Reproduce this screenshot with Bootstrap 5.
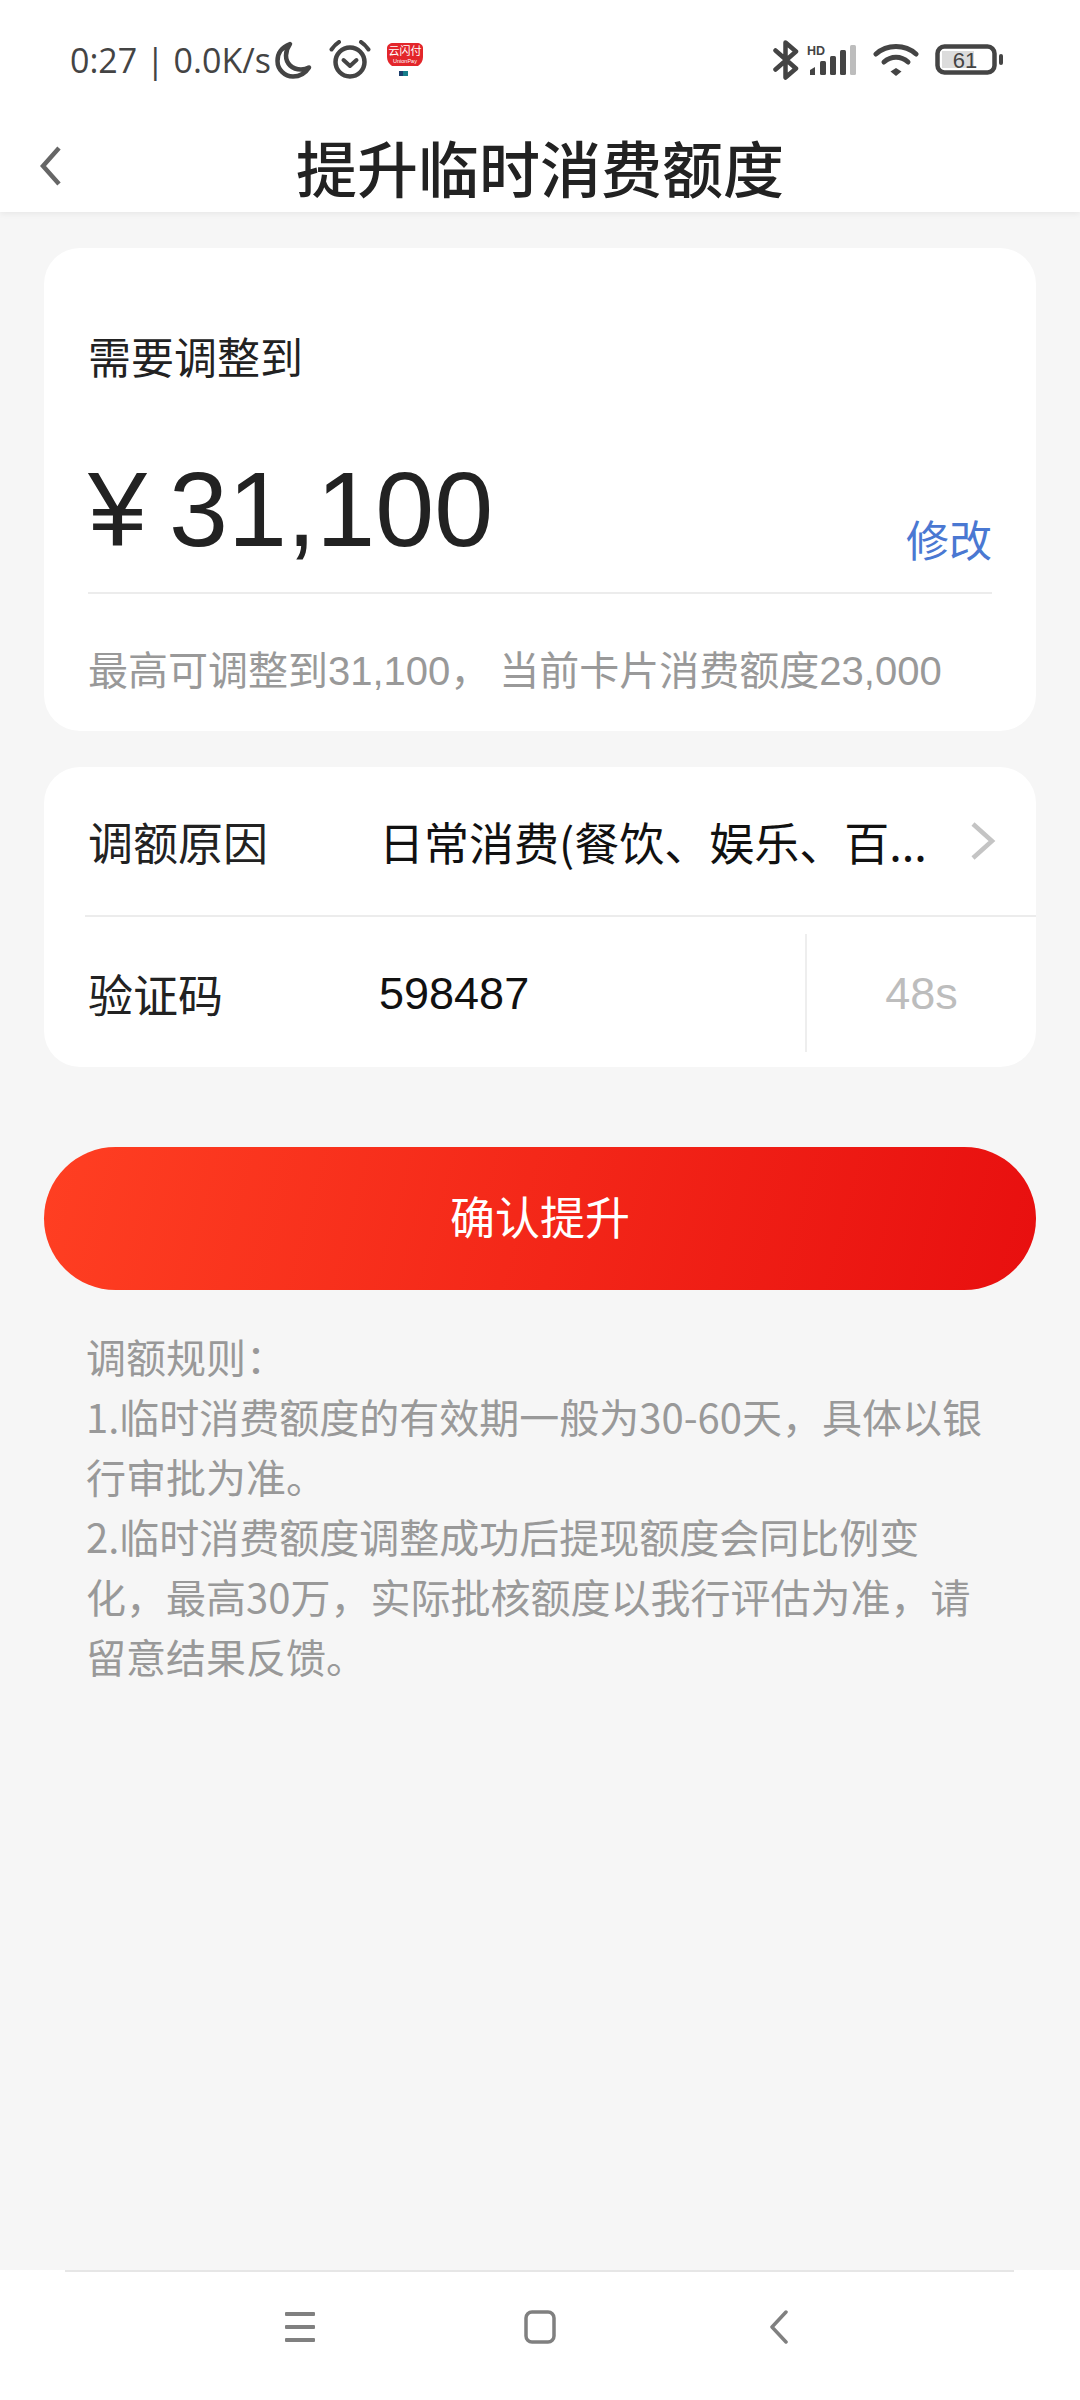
<!doctype html>
<html lang="zh">
<head>
<meta charset="utf-8">
<title>提升临时消费额度</title>
<link rel="stylesheet" href="https://cdn.jsdelivr.net/npm/bootstrap@5.3.0/dist/css/bootstrap.min.css">
<style>
html,body{margin:0;padding:0;}
body{width:1080px;height:2400px;overflow:hidden;background:#f6f6f6;font-family:"Noto Sans CJK SC","Noto Sans",sans-serif;}
.screen{width:1080px;height:2400px;}
.topbar{height:212px;background:#fff;box-shadow:0 2px 6px rgba(0,0,0,.06);position:relative;z-index:2;}
.statusrow{height:120px;padding:0 76px 0 70px;color:#444;}
.stime{font-family:"Open Sans","Noto Sans",sans-serif;font-size:34px;font-weight:500;line-height:1;letter-spacing:0;white-space:nowrap;}
.titlerow{height:92px;}
.titleside{flex:1 1 0;padding-left:40px;}
.ptitle{font-size:61px;font-weight:500;color:#222;line-height:1;margin:0;white-space:nowrap;}
.bodyarea{padding:36px 44px 0;}
.sheet{background:#fff;border-radius:36px;}
.sheet-a{height:483px;padding:0 44px;margin-bottom:36px;}
.lab1{font-size:43px;color:#222;line-height:1;padding-top:86px;}
.amountrow{height:217px;padding-bottom:30px;border-bottom:2px solid #ececec;}
.sheet-a .amountrow{margin-top:0;}
.amount{font-family:"Liberation Sans",sans-serif;font-size:106px;line-height:1;color:#222;}
.amount b{font-weight:400;margin-right:22px;}
.editlink{font-size:43px;color:#4a78d2;line-height:1;text-decoration:none;padding-bottom:2px;}
.hint{font-size:40px;color:#999;line-height:1;padding-top:54px;white-space:nowrap;}
.hint i{font-style:normal;font-family:"Liberation Sans",sans-serif;}
.sheet-b{height:300px;margin-bottom:80px;}
.frow{padding-left:44px;}
.frow1{height:148px;}
.frow2{height:152px;}
.rowline{height:2px;background:#ececec;margin-left:41px;}
.flabel{width:291px;flex:none;font-size:45px;color:#222;line-height:1;}
.fvalue{font-size:45px;color:#111;line-height:1;white-space:nowrap;}
.fvalue i{font-style:normal;}
.digits{font-family:"Liberation Sans",sans-serif;}
.chev{margin-left:auto;margin-right:40px;}
.vline{width:2px;height:118px;background:#eee;margin-left:auto;}
.counter{width:229px;text-align:center;font-family:"Liberation Sans",sans-serif;font-size:45px;color:#bdbdbd;line-height:1;}
.cta{display:block;width:100%;height:143px;border:0;border-radius:72px;background:linear-gradient(105deg,#ff3f22 0%,#e80f0f 100%);color:#fff;font-size:45px;line-height:1;padding:0 0 6px;}
.rules{margin:36px 0 0 42px;font-size:40px;line-height:60px;color:#999;white-space:nowrap;}
.navstrip{height:130px;background:#fff;position:relative;}
.navstrip::before{content:"";position:absolute;top:0;left:65px;right:66px;height:2px;background:#e6e6e6;}
.navicons{height:100%;padding-bottom:16px;}
.navslot{width:239px;}
</style>
</head>
<body>
<div class="screen d-flex flex-column">
  <header class="topbar">
    <div class="statusrow d-flex align-items-center justify-content-between">
      <div class="d-flex align-items-center">
        <span class="stime">0:27 | 0.0K/s</span>
        <svg class="ms-1" width="38" height="38" viewBox="0 0 38 38" fill="none" stroke="#444" stroke-width="4.5" stroke-linecap="round" stroke-linejoin="round"><path d="M15 3C7 6 2.500 12 2.500 20c0 8.500 7 15.500 15.500 15.500 7.500 0 12.500-3.500 16-9-2.500 1.500-5.500 2-8 2-9 0-15-6-15-14 0-4 1.500-8 4-11.500z"/></svg>
        <svg class="ms-3" width="42" height="40" viewBox="0 0 42 40" fill="none" stroke="#444" stroke-linecap="round" stroke-linejoin="round"><circle cx="21" cy="22" r="14.500" stroke-width="4.500"/><path d="M14.500 20l6.500 6 6.500-6" stroke-width="4"/><path d="M2.500 9.500C5 6 7.500 3.500 10 2M39.500 9.500C37 6 34.500 3.500 32 2" stroke-width="4"/></svg>
        <svg class="ms-3" width="36" height="34" viewBox="0 0 36 34"><path d="M6 0h24c3 0 6 2 6 5v9c0 4-2 7-5 9H5c-3-2-5-5-5-9V5c0-3 3-5 6-5z" fill="#e3262b"/><text x="18" y="12" font-size="11" fill="#fff" text-anchor="middle" font-family="Noto Sans CJK SC,sans-serif">云闪付</text><text x="18" y="20" font-size="5.500" fill="#fff" text-anchor="middle" font-family="Liberation Sans,sans-serif">UnionPay</text><rect x="12" y="28" width="4" height="5" fill="#1c3f6e"/><rect x="16" y="28" width="5" height="5" fill="#157d8a"/></svg>
      </div>
      <div class="d-flex align-items-center">
        <svg width="26" height="40" viewBox="0 0 26 40" fill="none" stroke="#444" stroke-width="4.500" stroke-linecap="round" stroke-linejoin="round"><path d="M2.500 10.500 L23 28.500 L12.500 37.500 V2.500 L23 11.500 L2.500 29.500"/></svg>
        <svg class="ms-2" width="50" height="32" viewBox="0 0 50 32"><text x="0" y="11" font-size="12.500" font-weight="700" fill="#444" font-family="Liberation Sans,sans-serif">HD</text><path d="M3 31v-5l5-3v8z" fill="#444"/><rect x="13" y="17" width="6" height="14" rx="1.500" fill="#444"/><rect x="23" y="12" width="6" height="19" rx="1.500" fill="#444"/><rect x="33" y="6" width="6" height="25" rx="1.500" fill="#444"/><rect x="43" y="1" width="6" height="30" rx="1.500" fill="#bdbdbd"/></svg>
        <svg class="ms-3" width="46" height="34" viewBox="0 0 46 34" fill="none" stroke="#444" stroke-width="5" stroke-linecap="round"><path d="M3 11C14 1 32 1 43 11"/><path d="M11 19C18 12.500 28 12.500 35 19"/><path d="M23 25l5.500 3.500L23 33l-5.500-4.500z" fill="#444" stroke="none"/></svg>
        <svg class="ms-3" width="69" height="32" viewBox="0 0 69 32"><rect x="2.500" y="2.500" width="57" height="26" rx="7" fill="none" stroke="#444" stroke-width="4.500"/><rect x="7" y="7" width="32" height="17" fill="#dcdcdc"/><text x="30" y="24" font-size="22" fill="#444" text-anchor="middle" font-family="Liberation Sans,sans-serif">61</text><rect x="64" y="10" width="4" height="11" rx="2" fill="#444"/></svg>
      </div>
    </div>
    <div class="titlerow d-flex align-items-center">
      <div class="titleside"><svg class="d-block" width="22" height="40" viewBox="0 0 22 40" fill="none" stroke="#666" stroke-width="4.500"><path d="M19 2 L3 20 L19 38"/></svg></div>
      <h1 class="ptitle">提升临时消费额度</h1>
      <div class="titleside"></div>
    </div>
  </header>

  <main class="bodyarea flex-grow-1">
    <section class="sheet sheet-a">
      <div class="lab1">需要调整到</div>
      <div class="amountrow d-flex align-items-end justify-content-between">
        <div class="amount"><b>¥</b>31,100</div>
        <a class="editlink" href="#">修改</a>
      </div>
      <div class="hint">最高可调整到<i>31,100</i>， 当前卡片消费额度<i>23,000</i></div>
    </section>

    <section class="sheet sheet-b">
      <div class="frow frow1 d-flex align-items-center">
        <div class="flabel">调额原因</div>
        <div class="fvalue">日常消费(餐饮、娱乐、百...</div>
        <svg class="chev" width="26" height="38" viewBox="0 0 26 38" fill="none" stroke="#c4c4c4" stroke-width="4.500"><path d="M3 2 L22 19 L3 36"/></svg>
      </div>
      <div class="rowline"></div>
      <div class="frow frow2 d-flex align-items-center">
        <div class="flabel">验证码</div>
        <div class="fvalue digits">598487</div>
        <div class="vline"></div>
        <div class="counter">48s</div>
      </div>
    </section>

    <button type="button" class="btn cta">确认提升</button>

    <div class="rules">调额规则：<br>1.临时消费额度的有效期一般为30-60天，具体以银<br>行审批为准。<br>2.临时消费额度调整成功后提现额度会同比例变<br>化，最高30万，实际批核额度以我行评估为准，请<br>留意结果反馈。</div>
  </main>

  <nav class="navstrip">
    <div class="navicons d-flex align-items-center justify-content-center">
      <div class="navslot d-flex justify-content-center"><svg width="32" height="30" viewBox="0 0 32 30" fill="#808080"><rect y="0" width="30" height="4" rx="1"/><rect y="13" width="30" height="4" rx="1"/><rect y="26" width="30" height="4" rx="1"/></svg></div>
      <div class="navslot d-flex justify-content-center"><svg width="32" height="34" viewBox="0 0 32 34" fill="none" stroke="#808080" stroke-width="3.500"><rect x="2" y="2" width="28" height="30" rx="6"/></svg></div>
      <div class="navslot d-flex justify-content-center"><svg width="20" height="34" viewBox="0 0 20 34" fill="none" stroke="#808080" stroke-width="3.500" stroke-linecap="round" stroke-linejoin="round"><path d="M17 2 L3 17 L17 32"/></svg></div>
    </div>
  </nav>
</div>
<script src="https://cdn.jsdelivr.net/npm/bootstrap@5.3.0/dist/js/bootstrap.bundle.min.js"></script>
</body>
</html>
